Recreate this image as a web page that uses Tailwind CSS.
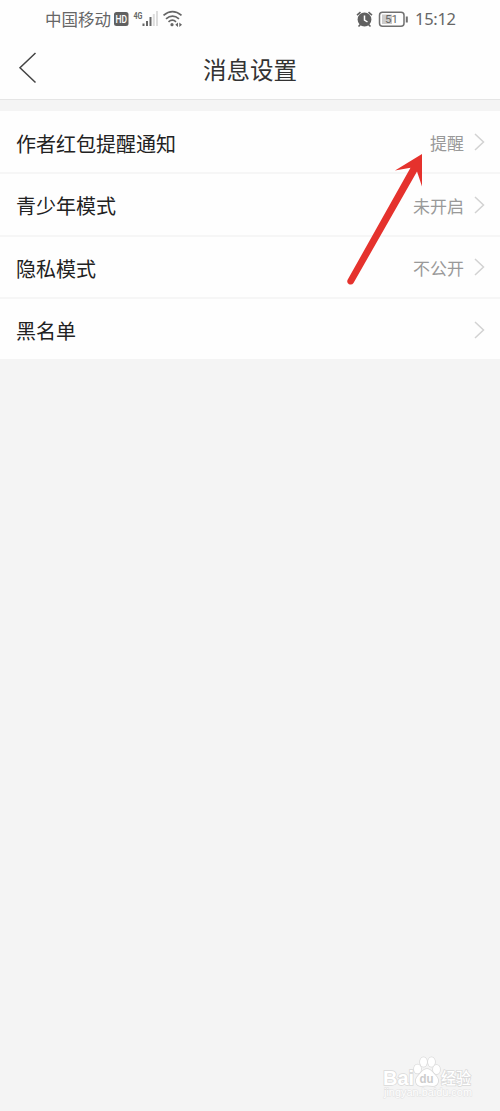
<!DOCTYPE html>
<html lang="zh-CN">
<head>
<meta charset="utf-8">
<title>消息设置</title>
<script src="https://cdn.jsdelivr.net/npm/@tailwindcss/browser@4"></script>
</head>
<body class="bg-[#f4f4f4] font-['Noto_Sans_CJK_SC',sans-serif]">
<div class="relative w-[500px] h-[1111px] overflow-hidden flex flex-col">
  <header class="h-[100px] shrink-0 bg-[#fefefe] border-b border-[#e5e5e5] flex flex-col">
    <div class="h-[37px] flex items-center pl-[45px] pr-[40px] text-[#666]">
      <span class="text-[16.5px] leading-[24px] pt-px">中国移动</span>
      <svg class="ml-[2px]" width="72" height="24" viewBox="113 6 72 24">
        <rect x="114" y="11" width="14.500" height="14" rx="2.500" fill="#606060"/>
        <text x="115.500" y="21.800" font-family="Roboto" font-weight="500" font-size="10" textLength="11.500" lengthAdjust="spacingAndGlyphs" fill="#fff">HD</text>
        <text x="133.500" y="17.500" font-family="Roboto" font-weight="700" font-size="8.500" textLength="9" lengthAdjust="spacingAndGlyphs" fill="#666">4G</text>
        <g fill="#666"><rect x="142.500" y="22.500" width="2" height="2.500"/><rect x="146" y="20" width="2" height="5"/><rect x="149.500" y="16" width="2" height="9"/></g>
        <rect x="152.800" y="13" width="2" height="12" fill="#ddd"/><rect x="156" y="10" width="2" height="15" fill="#ddd"/>
        <g fill="none" stroke="#666" stroke-width="1.700"><path d="M163.500 14.300Q172.500 7 181.500 14.300"/><path d="M166 17.800Q172.500 12.500 179 17.800"/><path d="M168.500 20.800Q172.500 17.500 176 20.800"/></g>
        <circle cx="172" cy="23.700" r="1.600" fill="#666"/>
        <path d="M178 21.500L175.300 23.700L178 26zM179.300 21.500L182 23.700L179.300 26z" fill="#666"/>
      </svg>
      <svg class="ml-auto mr-[6px]" width="54" height="24" viewBox="355 6 54 24">
        <circle cx="364.500" cy="18.500" r="6.900" fill="#606060"/>
        <path d="M357 14.200L360.500 11.200M372 14.200L368.500 11.200M360.500 23.500L358.500 25.500M368.500 23.500L370.500 25.500" stroke="#606060" stroke-width="1.600"/>
        <path d="M364.500 14.500V19L367.500 21" fill="none" stroke="#fff" stroke-width="1.500"/>
        <rect x="379.500" y="11.300" width="24.500" height="14" rx="3" fill="none" stroke="#707070" stroke-width="1.500"/>
        <rect x="382" y="13.500" width="10" height="9.500" fill="#ccc"/>
        <text x="385" y="22.300" font-family="Roboto" font-size="11.500" fill="#666">51</text>
        <path d="M406.800 15.500V21.500" stroke="#707070" stroke-width="2"/>
      </svg>
      <span class="text-[16.5px] leading-[24px] w-[45px] whitespace-nowrap tracking-[-0.3px] font-['Noto_Sans']">15:12</span>
    </div>
    <div class="flex-1 grid grid-cols-[1fr_auto_1fr] items-center">
      <svg class="ml-[18px]" width="20" height="34" viewBox="18 51 20 34"><path d="M35.500 53L20 67.800L35.500 82.500" fill="none" stroke="#444" stroke-width="1.500"/></svg>
      <h1 class="text-[23.5px] leading-[34px] text-[#333] relative top-px">消息设置</h1>
    </div>
  </header>
  <main class="mt-[11px] bg-[#fefefe] h-[248px] shrink-0 grid grid-rows-[63px_63px_62px_60px] text-[20px] text-[#222]">
    <div class="flex items-center pl-4 pr-[15px] border-b-2 border-[#f6f6f6]"><span class="pt-[4px]">作者红包提醒通知</span><span class="ml-auto text-[17px] text-[#999] pt-[3px]">提醒</span><svg class="ml-[10px] mt-px" width="11" height="20" viewBox="0 0 11 20"><path d="M1 2L9.500 10L1 18" fill="none" stroke="#d2d2d2" stroke-width="1.500"/></svg></div>
    <div class="flex items-center pl-4 pr-[15px] border-b-2 border-[#f6f6f6]"><span class="pt-[3px]">青少年模式</span><span class="ml-auto text-[17px] text-[#999] pt-[2px]">未开启</span><svg class="ml-[10px] mt-px" width="11" height="20" viewBox="0 0 11 20"><path d="M1 2L9.500 10L1 18" fill="none" stroke="#d2d2d2" stroke-width="1.500"/></svg></div>
    <div class="flex items-center pl-4 pr-[15px] border-b-2 border-[#f6f6f6]"><span class="pt-[4px]">隐私模式</span><span class="ml-auto text-[17px] text-[#999] pt-[2px]">不公开</span><svg class="ml-[10px]" width="11" height="20" viewBox="0 0 11 20"><path d="M1 2L9.500 10L1 18" fill="none" stroke="#d2d2d2" stroke-width="1.500"/></svg></div>
    <div class="flex items-center pl-4 pr-[15px]"><span class="pt-[4px]">黑名单</span><svg class="ml-auto mt-[2px]" width="11" height="20" viewBox="0 0 11 20"><path d="M1 2L9.500 10L1 18" fill="none" stroke="#d2d2d2" stroke-width="1.500"/></svg></div>
  </main>
  <svg class="absolute left-[340px] top-[145px]" width="90" height="145" viewBox="340 145 90 145">
    <path d="M422 154L395 170.500L410.500 167.800L347.500 280Q346.500 283 349 284.300Q352 285.300 353.500 283L417 171.500L422 186.500z" fill="#e5322d"/>
  </svg>
  <svg class="absolute left-[378px] top-[1052px]" width="102" height="48" viewBox="378 1052 102 48">
    <g fill="#fff" stroke="#d9d9d9" stroke-width="1.500" paint-order="stroke">
      <text x="383" y="1085" font-family="Liberation Sans" font-weight="700" font-size="20" textLength="31" lengthAdjust="spacingAndGlyphs">Bai</text>
      <ellipse cx="417.500" cy="1069" rx="3.500" ry="4.500"/><ellipse cx="423.500" cy="1062" rx="3.500" ry="4.800"/><ellipse cx="431.500" cy="1062" rx="3.500" ry="4.800"/><ellipse cx="436.500" cy="1069.500" rx="3.500" ry="4.500"/>
      <path d="M427 1069C423 1069 421 1073 418 1076C414 1080 416 1086 421 1086Q427 1085 433 1086C438 1086 440 1080 436 1076C433 1073 431 1069 427 1069z"/>
      <text x="441" y="1084" font-weight="500" font-size="16" textLength="30" lengthAdjust="spacingAndGlyphs">经验</text>
    </g>
    <text x="419.500" y="1083" font-family="Liberation Sans" font-weight="700" font-size="13" textLength="14" lengthAdjust="spacingAndGlyphs" fill="#ccc">du</text>
    <text x="384" y="1096" font-family="Liberation Sans" font-size="10" textLength="88" lengthAdjust="spacingAndGlyphs" fill="#fff" stroke="#e2e2e2" stroke-width="1" paint-order="stroke">jingyan.baidu.com</text>
  </svg>
</div>
</body>
</html>
